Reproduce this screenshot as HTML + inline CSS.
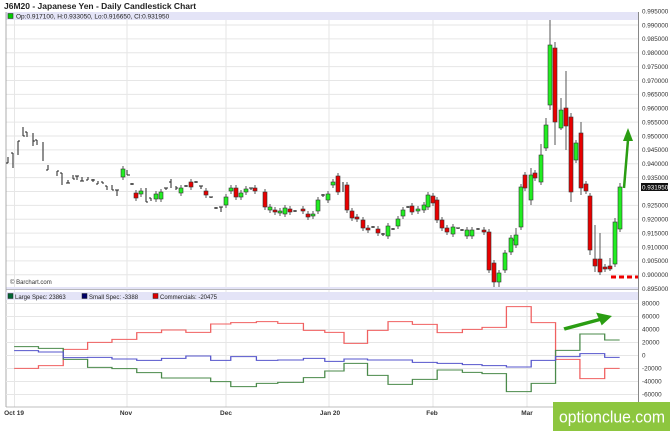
<!DOCTYPE html>
<html><head><meta charset="utf-8"><style>
html,body{margin:0;padding:0;background:#fff;width:670px;height:431px;overflow:hidden}
svg{display:block;font-family:"Liberation Sans",sans-serif}
</style></head><body>
<svg width="670" height="431" viewBox="0 0 670 431" xmlns="http://www.w3.org/2000/svg">
<text x="4" y="9" font-size="8.5" font-weight="bold" fill="#222">J6M20 - Japanese Yen - Daily Candlestick Chart</text>
<rect x="6" y="12" width="632" height="278" fill="#fff"/>
<g stroke="#e6e6e6" stroke-width="1">
<path d="M6 25H638M6 38.9H638M6 52.8H638M6 66.6H638M6 80.5H638M6 94.4H638M6 108.3H638M6 122.1H638M6 136H638M6 149.9H638M6 163.8H638M6 177.6H638M6 191.5H638M6 205.4H638M6 219.3H638M6 233.1H638M6 247H638M6 260.9H638M6 274.8H638"/>
<path d="M14.5 12V407M127 12V407M226 12V407M329 12V407M433 12V407M527 12V407"/>
</g>
<rect x="6" y="12" width="632" height="8" fill="#e4e4f7"/>
<rect x="8" y="13.5" width="5" height="5" fill="#0c0" stroke="#333" stroke-width=".6"/>
<text x="16" y="18.5" font-size="6.5" fill="#222">Op:0.917100, H:0.933050, Lo:0.916650, Cl:0.931950</text>
<rect x="6" y="287" width="632" height="3" fill="#e4e4f7"/>
<line x1="6" y1="12" x2="6" y2="407" stroke="#999" stroke-width=".8"/>
<line x1="638.5" y1="12" x2="638.5" y2="407" stroke="#888" stroke-width="1"/>
<text x="10" y="284" font-size="6" fill="#333">© Barchart.com</text>
<g font-size="6.3" fill="#333">
<text x="642" y="13.5">0.995000</text><text x="642" y="27.3">0.990000</text><text x="642" y="41.2">0.985000</text><text x="642" y="55.1">0.980000</text><text x="642" y="69">0.975000</text><text x="642" y="82.8">0.970000</text><text x="642" y="96.7">0.965000</text><text x="642" y="110.6">0.960000</text><text x="642" y="124.5">0.955000</text><text x="642" y="138.3">0.950000</text><text x="642" y="152.2">0.945000</text><text x="642" y="166.1">0.940000</text><text x="642" y="180">0.935000</text><text x="642" y="207.7">0.925000</text><text x="642" y="221.6">0.920000</text><text x="642" y="235.5">0.915000</text><text x="642" y="249.4">0.910000</text><text x="642" y="263.2">0.905000</text><text x="642" y="277.1">0.900000</text><text x="642" y="291">0.895000</text>
</g>
<rect x="641" y="183" width="27" height="8" fill="#111"/>
<text x="642" y="189.5" font-size="6.3" fill="#fff">0.931950</text>
<g stroke="#555" stroke-width="1" fill="none">
<path d="M123 166V180M141 188V197M156 191V202M161 189V202M181 185V196M226 194V208M231 185V194M241 190V200M246 186V195M270 204V213M280 208V216M285 205V217M313 211V219M318 197V214M328 191V203M333 179V188M388 223V239M398 216V229M403 207V219M418 206V214M424 202V213M428 192V210M453 224V237M467 227V239M472 227V239M499 270V287M505 250V273M511 235V255M516 228V248M521 184V230M525 172V191M531 168V205M535 170V181M541 144V185M546 118V151M550 20V110M561 98V130M576 140V163M615 218V267M620 183V232"/>
<path d="M136 190V201M191 179V190M206 188V198M236 185V200M255 185V194M265 189V210M275 207V215M290 206V215M303 206V214M308 211V220M338 173V195M347 182V213M352 208V221M357 214V222M363 217V231M368 225V233M378 226V236M412 203V215M433 193V206M437 197V223M442 217V231M447 225V235M484 227V235M489 229V273M494 260V287M555 42V145M566 71V150M571 113V202M581 122V195M586 181V194M590 193V255M595 225V272M600 233V275M605 264V272M610 258V271"/>
</g>
<g stroke="#222" stroke-width="1" fill="none">
<path d="M8 157V163M6 163H8M13 153V168M11 153H13M18 141V155M18 141H20M23 127V136M23 136H25M27 132V137M25 132H27M33 133V146M33 141H35M37 140V145M35 140H37M43 142V161M48 165V170M46 170H48M57 171V176M57 171H59M62 173V185M60 173H62M68 180V183M66 183H70M73 175V179M73 179H75M77 176V180M75 176H79M82 177V181M80 181H84M88 177V180M86 180H88M93 179V182M91 180H95M98 181V184M96 184H98M103 182V184M101 182H103M107 186V190M105 186H107M112 185V190M112 190H114M117 190V196M115 190H119M127 170V175M127 175H130M132 183V185M130 184H134M146 188V202M146 202H148M151 198V201M149 198H151M166 188V190M164 188H168M171 179V188M169 182H171M176 186V190M176 188H178M186 185V187M184 186H188M196 181V183M194 182H198M201 186V189M199 186H203M211 197V198M209 197H213M216 207V209M214 208H218M221 207V212M219 207H223M251 188V190M249 188H253M295 210V212M293 211H297M323 194V197M321 195H325M343 182V192M373 226V228M371 227H375M383 233V236M381 234H385M393 228V230M391 229H395M408 206V208M406 207H410M458 228V229M456 228H460M462 229V231M460 230H464M478 228V230M476 229H480M512 238V242M510 240H514"/>
</g>
<g fill="#22ee22" stroke="#333" stroke-width=".6">
<rect x="121" y="169" width="4" height="8"/><rect x="139" y="191" width="4" height="3"/><rect x="154" y="194" width="4" height="5"/><rect x="159" y="192" width="4" height="7"/><rect x="179" y="188" width="4" height="5"/><rect x="224" y="197" width="4" height="8"/><rect x="229" y="188" width="4" height="3"/><rect x="239" y="193" width="4" height="4"/><rect x="244" y="189" width="4" height="3"/><rect x="268" y="207" width="4" height="3"/><rect x="278" y="211" width="4" height="2"/><rect x="283" y="208" width="4" height="6"/><rect x="311" y="214" width="4" height="2"/><rect x="316" y="200" width="4" height="11"/><rect x="326" y="194" width="4" height="6"/><rect x="331" y="182" width="4" height="3"/><rect x="386" y="226" width="4" height="10"/><rect x="396" y="219" width="4" height="7"/><rect x="401" y="210" width="4" height="6"/><rect x="416" y="209" width="4" height="2"/><rect x="422" y="205" width="4" height="5"/><rect x="426" y="195" width="4" height="12"/><rect x="451" y="227" width="4" height="7"/><rect x="465" y="230" width="4" height="6"/><rect x="470" y="230" width="4" height="6"/><rect x="497" y="273" width="4" height="9"/><rect x="503" y="253" width="4" height="17"/><rect x="509" y="238" width="4" height="14"/><rect x="514" y="235" width="4" height="10"/><rect x="519" y="187" width="4" height="40"/><rect x="529" y="175" width="4" height="25"/><rect x="539" y="155" width="4" height="27"/><rect x="544" y="125" width="4" height="23"/><rect x="548" y="45" width="4" height="60"/><rect x="559" y="110" width="4" height="18"/><rect x="574" y="143" width="4" height="17"/><rect x="613" y="222" width="4" height="42"/><rect x="618" y="187" width="4" height="42"/>
</g>
<g fill="#e80000" stroke="#333" stroke-width=".6">
<rect x="134" y="193" width="4" height="5"/><rect x="189" y="182" width="4" height="5"/><rect x="204" y="191" width="4" height="4"/><rect x="234" y="188" width="4" height="9"/><rect x="253" y="188" width="4" height="3"/><rect x="263" y="192" width="4" height="15"/><rect x="273" y="210" width="4" height="2"/><rect x="288" y="209" width="4" height="3"/><rect x="301" y="209" width="4" height="2"/><rect x="306" y="214" width="4" height="3"/><rect x="336" y="176" width="4" height="16"/><rect x="345" y="185" width="4" height="25"/><rect x="350" y="211" width="4" height="7"/><rect x="355" y="217" width="4" height="2"/><rect x="361" y="220" width="4" height="8"/><rect x="366" y="228" width="4" height="2"/><rect x="376" y="229" width="4" height="4"/><rect x="410" y="206" width="4" height="6"/><rect x="431" y="196" width="4" height="7"/><rect x="435" y="200" width="4" height="20"/><rect x="440" y="220" width="4" height="8"/><rect x="445" y="228" width="4" height="4"/><rect x="482" y="230" width="4" height="2"/><rect x="487" y="232" width="4" height="38"/><rect x="492" y="263" width="4" height="19"/><rect x="523" y="175" width="4" height="13"/><rect x="533" y="173" width="4" height="5"/><rect x="553" y="48" width="4" height="74"/><rect x="564" y="108" width="4" height="18"/><rect x="569" y="117" width="4" height="75"/><rect x="579" y="133" width="4" height="55"/><rect x="584" y="184" width="4" height="7"/><rect x="588" y="196" width="4" height="54"/><rect x="593" y="259" width="4" height="7"/><rect x="598" y="259" width="4" height="13"/><rect x="603" y="267" width="4" height="2"/><rect x="608" y="266" width="4" height="3"/>
</g>
<line x1="611" y1="277" x2="638" y2="277" stroke="#e00" stroke-width="3" stroke-dasharray="5,3"/>
<line x1="624" y1="188" x2="628" y2="140" stroke="#2a9d12" stroke-width="2.5"/>
<polygon points="623,141 633,141 628,128" fill="#2a9d12"/>
<g stroke="#e6e6e6"><path d="M6 303.5H638M6 316.5H638M6 329.5H638M6 342.5H638M6 355.5H638M6 368.5H638M6 381.5H638M6 394.5H638"/></g>
<rect x="6" y="292" width="632" height="8" fill="#e4e4f7"/>
<line x1="6" y1="289.5" x2="638" y2="289.5" stroke="#aaa" stroke-width=".8"/>
<line x1="6" y1="407" x2="638" y2="407" stroke="#aaa" stroke-width=".8"/>
<rect x="8" y="293.5" width="5" height="5" fill="#063" stroke="#222" stroke-width=".5"/>
<text x="15" y="299" font-size="6" fill="#222">Large Spec: 23863</text>
<rect x="82" y="293.5" width="5" height="5" fill="#006" stroke="#222" stroke-width=".5"/>
<text x="89" y="299" font-size="6" fill="#222">Small Spec: -3388</text>
<rect x="153" y="293.5" width="5" height="5" fill="#d00" stroke="#222" stroke-width=".5"/>
<text x="160" y="299" font-size="6" fill="#222">Commercials: -20475</text>
<g font-size="6.3" fill="#333">
<text x="642" y="305.5">80000</text><text x="642" y="318.5">60000</text><text x="642" y="331.5">40000</text><text x="642" y="344.5">20000</text><text x="642" y="357.5">0</text><text x="642" y="370.5">-20000</text><text x="642" y="383.5">-40000</text><text x="642" y="396.5">-60000</text>
</g>
<g transform="translate(0,280) scale(0.42735,0.33333)" fill="none" stroke-width="3">
<path stroke="#f06060" d="M33 265H90V257H148V208H205V187H262V178H320V158H378V150H435V157H493V132H540V128H600V125H650V130H710V151H760V157H805V190H860V151H908V125H965V133H1023V158H1082V148H1128V142H1185V80H1243V128H1300V238H1357V296H1415V265H1450"/>
<path stroke="#4a8a4a" d="M33 200H90V205H148V238H205V262H262V266H320V278H378V294H493V305H540V320H600V310H650V307H710V293H760V273H805V250H860V286H908V313H965V298H1023V270H1082V277H1128V281H1185V335H1243V310H1300V211H1357V162H1415V180H1450"/>
<path stroke="#5555cc" d="M33 212H90V216H148V233H205V232H262V237H320V241H378V235H435V228H493V241H540V230H600V241H650V240H710V235H760V244H805V237H860V240H965V247H1023V250H1082V254H1128V257H1185V261H1243V241H1300V230H1357V221H1415V232H1450"/>
<line x1="1320" y1="147" x2="1405" y2="118" stroke="#2a9d12" stroke-width="10"/>
<polygon points="1395,98 1432,108 1408,136" fill="#2a9d12"/>
</g>
<g font-size="6.5" font-weight="bold" fill="#333" text-anchor="middle">
<text x="14" y="415">Oct 19</text><text x="126" y="415">Nov</text><text x="226" y="415">Dec</text><text x="330" y="415">Jan 20</text><text x="432" y="415">Feb</text><text x="527" y="415">Mar</text>
</g>
<rect x="553" y="402" width="117" height="29" fill="#8dc63f"/>
<text x="559" y="422.5" font-size="17" fill="#fff" textLength="106" lengthAdjust="spacingAndGlyphs">optionclue.com</text>
</svg>
</body></html>
